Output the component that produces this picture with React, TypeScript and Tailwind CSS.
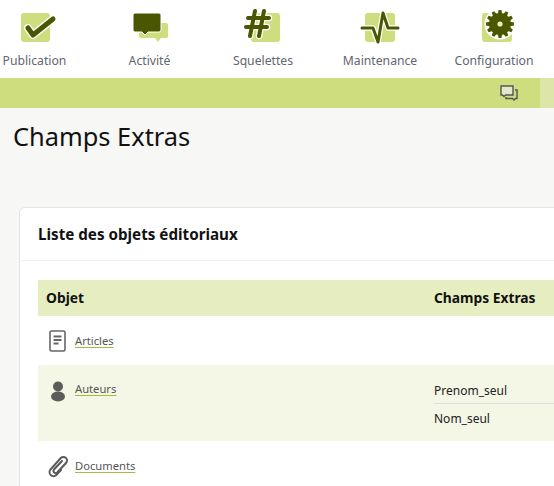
const font = "font-['Noto_Sans','Open_Sans',sans-serif]";

function Publication() {
  return (
    <svg width="40" height="34" viewBox="0 0 40 34" className="overflow-visible">
      <rect x="5" y="5" width="29" height="29" rx="3" fill="#cedd7e" />
      <path d="M12 20 L17 27 L37 11" fill="none" stroke="#fff" strokeWidth="8" strokeLinecap="round" strokeLinejoin="round" />
      <path d="M12 20 L17 27 L37 11" fill="none" stroke="#4a5600" strokeWidth="5" strokeLinecap="round" strokeLinejoin="round" />
    </svg>
  );
}

function Activite() {
  return (
    <svg width="40" height="34" viewBox="0 0 40 34" className="overflow-visible">
      <path d="M10 15 h25 a2 2 0 0 1 2 2 v11 a2 2 0 0 1 -2 2 h-5 l-3 4 l-3 -4 h-14 a2 2 0 0 1 -2 -2 v-11 a2 2 0 0 1 2 -2 z" fill="#cedd7e" />
      <path d="M4 5 h24 a2 2 0 0 1 2 2 v15 a2 2 0 0 1 -2 2 h-11 l-3 3 l-3 -3 h-7 a2 2 0 0 1 -2 -2 v-15 a2 2 0 0 1 2 -2 z" fill="#4a5600" stroke="#fff" strokeWidth="1" />
    </svg>
  );
}

function Squelettes() {
  const hash = "M12 3 L7 28 M21 3 L16 28 M5 10 H26 M3 19 H24";
  return (
    <svg width="40" height="34" viewBox="0 0 40 34" className="overflow-visible">
      <rect x="8" y="5" width="29" height="29" rx="3" fill="#cedd7e" />
      <path d={hash} fill="none" stroke="#fff" strokeWidth="6.5" strokeLinecap="round" />
      <path d={hash} fill="none" stroke="#4a5600" strokeWidth="4" strokeLinecap="round" />
    </svg>
  );
}

function Maintenance() {
  const pulse = "M2 20 H13 L18 34 L23 5 L28 20 H38";
  return (
    <svg width="40" height="34" viewBox="0 0 40 34" className="overflow-visible">
      <rect x="5" y="5" width="30" height="29" rx="3" fill="#cedd7e" />
      <path d={pulse} fill="none" stroke="#fff" strokeWidth="5.5" strokeLinejoin="round" />
      <path d={pulse} fill="none" stroke="#4a5600" strokeWidth="3" strokeLinecap="round" strokeLinejoin="round" />
    </svg>
  );
}

function Configuration() {
  const teeth = Array.from({ length: 12 }, (_, i) => i * 30);
  return (
    <svg width="40" height="34" viewBox="0 0 40 34" className="overflow-visible">
      <rect x="5" y="5" width="30" height="29" rx="3" fill="#cedd7e" />
      <circle cx="23" cy="16" r="15.5" fill="#fff" />
      {teeth.map((a) => (
        <path key={a} d="M20.8 6 L21.6 2 H24.4 L25.2 6 Z" fill="#4a5600" transform={`rotate(${a} 23 16)`} />
      ))}
      <circle cx="23" cy="16" r="11" fill="#4a5600" />
      <circle cx="23" cy="16" r="2.6" fill="#e6eec1" />
    </svg>
  );
}

const navItems = [
  { label: "Publication", Icon: Publication, width: "w-[69px]", ml: "ml-0", shift: "mr-[2px]" },
  { label: "Activité", Icon: Activite, width: "w-[60px]", ml: "ml-[51px]", shift: "mr-[3px]" },
  { label: "Squelettes", Icon: Squelettes, width: "w-[70px]", ml: "ml-[47px]", shift: "ml-0" },
  { label: "Maintenance", Icon: Maintenance, width: "w-[80px]", ml: "ml-[42px]", shift: "ml-0" },
  { label: "Configuration", Icon: Configuration, width: "w-[84px]", ml: "ml-[35px]", shift: "mr-[6px]" },
];

function ArticleIcon() {
  return (
    <svg width="20" height="24" viewBox="0 0 20 24" fill="none" stroke="#666" strokeWidth="1.6">
      <rect x="2" y="2" width="15" height="20" rx="1.5" />
      <path d="M5.5 7.5 H13.5 M5.5 11 H13.5 M5.5 14.5 H10.5" strokeWidth="1.8" />
    </svg>
  );
}

function PersonIcon() {
  return (
    <svg width="16" height="21" viewBox="0 0 16 21" fill="#5c5c5c">
      <circle cx="8" cy="5.5" r="5" />
      <ellipse cx="8" cy="15.5" rx="7" ry="5" />
    </svg>
  );
}

function PaperclipIcon() {
  return (
    <svg width="24" height="26" viewBox="0 0 24 26" fill="none" stroke="#5a5a5a" strokeWidth="2" strokeLinecap="round">
      <path d="M16 8 L8 16.5 a2.2 2.2 0 0 0 3.2 3 L20 10 a3.6 3.6 0 0 0 -5.2 -5 L4.5 16.5 a4 4 0 0 0 5.8 5.5 L15 17" />
    </svg>
  );
}

function ObjLink({ children }: { children: string }) {
  return (
    <a className="text-[11.2px] leading-[14px] text-[#555] underline decoration-[#a4bb3c] underline-offset-2">
      {children}
    </a>
  );
}

export default function App() {
  return (
    <div className={`h-[486px] w-[554px] overflow-hidden bg-[#f7f7f5] ${font}`}>
      <nav className="flex h-[78px] bg-white pl-[1px] pt-[8px]">
        {navItems.map(({ label, Icon, width, ml, shift }) => (
          <div key={label} className={`flex flex-col items-center ${width} ${ml}`}>
            <Icon />
            <span className={`mt-[10px] whitespace-nowrap text-[12.2px] leading-[18px] text-[#5f6670] ${shift}`}>{label}</span>
          </div>
        ))}
      </nav>

      <div className="flex h-[30px] bg-[#cedd7e]">
        <div className="flex w-[540px] items-center justify-end pr-[22px]">
          <svg width="18" height="16" viewBox="0 0 18 16" fill="none" stroke="#555" strokeWidth="1.4">
            <path d="M1 1 H13 V10 H5.5 L4 11.5 L2.5 10 H1 Z" fill="#e4e8c8" />
            <path d="M15 5 H17 V13.5 H15.5 L14 15 L12.5 13.5 H6 V12" />
          </svg>
        </div>
        <div className="flex-1 bg-[#dde6a8]" />
      </div>

      <h1 className="ml-[13px] mt-[11px] text-[25.4px] leading-[34px] text-[#111]">Champs Extras</h1>

      <section className="ml-[19px] mt-[54px] w-[600px] rounded-md border border-[#e6e6e4] bg-white">
        <h2 className="flex h-[53px] items-center border-b border-[#f0f0ee] pl-[18px] text-[15.2px] font-bold text-[#111]">
          Liste des objets éditoriaux
        </h2>
        <div className="ml-[18px] mt-[19px]">
          <div className="flex h-[36px] items-center bg-[#e6eec1] text-[13.8px] font-bold text-[#111]">
            <div className="w-[396px] pl-[8px]">Objet</div>
            <div>Champs Extras</div>
          </div>
          <div className="flex h-[49px] bg-white">
            <div className="flex w-[396px] items-start pl-[10px] pt-[13px]">
              <ArticleIcon />
              <span className="ml-[7px] mt-[-2px]"><ObjLink>Articles</ObjLink></span>
            </div>
          </div>
          <div className="flex h-[76px] bg-[#f5f7e6]">
            <div className="flex w-[396px] items-start pl-[12px] pt-[16px]">
              <PersonIcon />
              <span className="ml-[9px] mt-[-6px]"><ObjLink>Auteurs</ObjLink></span>
            </div>
            <div className="flex-1 pt-[11px] text-[12px] text-[#222]">
              <div className="h-[28px] border-b border-[#dfdfdd] pt-[6px] leading-[18px]">Prenom_seul</div>
              <div className="pt-[6px] leading-[18px]">Nom_seul</div>
            </div>
          </div>
          <div className="flex h-[50px] items-start bg-white pl-[8px] pt-[12px]">
            <PaperclipIcon />
            <span className="ml-[5px] mt-[-1px]"><ObjLink>Documents</ObjLink></span>
          </div>
        </div>
      </section>
    </div>
  );
}
